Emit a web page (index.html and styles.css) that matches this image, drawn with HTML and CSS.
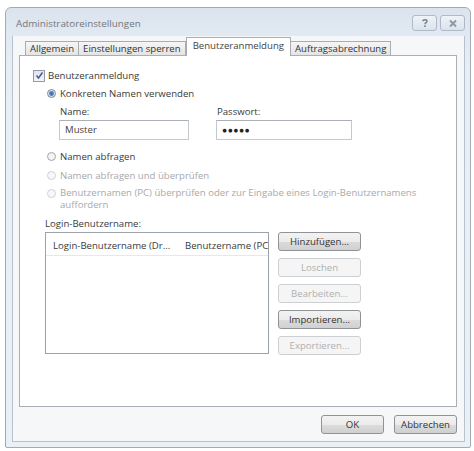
FILE: index.html
```html
<!DOCTYPE html>
<html>
<head>
    <link rel="stylesheet" href="styles.css">
</head>
<body>
    <div class="window">
        <div class="titlebar">
            <span class="title">Administratoreinstellungen</span>
            <div class="caption">
                <span class="cap-btn">
                    <svg width="10" height="10" viewBox="0 0 10 10"><path d="M3 3.2 C3 1.4 7 1.4 7 3.2 C7 4.6 5 4.6 5 6.2" fill="none" stroke="#75828f" stroke-width="1.5"/><rect x="4.2" y="7.4" width="1.6" height="1.6" fill="#75828f"/></svg>
                </span>
                <span class="cap-btn">
                    <svg width="10" height="9" viewBox="0 0 10 9"><path d="M2 1.5 L8 7.5 M8 1.5 L2 7.5" stroke="#8b97a4" stroke-width="1.8"/></svg>
                </span>
            </div>
        </div>
        <div class="client">
            <div class="tabs">
                <span class="tab">Allgemein</span>
                <span class="tab">Einstellungen sperren</span>
                <span class="tab active">Benutzeranmeldung</span>
                <span class="tab">Auftragsabrechnung</span>
            </div>
            <div class="panel">
                <label class="row check-row">
                    <span class="checkbox">
                        <svg width="9" height="9" viewBox="0 0 9 9"><path d="M1.5 4.5 L3.5 7 L7.5 1.5" fill="none" stroke="#4a5c8c" stroke-width="1.5"/></svg>
                    </span>
                    Benutzeranmeldung
                </label>

                <div class="options">
                    <label class="row radio-row first">
                        <span class="radio checked"></span>
                        Konkreten Namen verwenden
                    </label>
                    <div class="fields">
                        <div class="field">
                            <span class="field-label">Name:</span>
                            <div class="input name-input">Muster</div>
                        </div>
                        <div class="field">
                            <span class="field-label">Passwort:</span>
                            <div class="input pass-input">&#9679;&#9679;&#9679;&#9679;&#9679;</div>
                        </div>
                    </div>
                    <label class="row radio-row second">
                        <span class="radio"></span>
                        Namen abfragen
                    </label>
                    <label class="row radio-row disabled third">
                        <span class="radio"></span>
                        Namen abfragen und überprüfen
                    </label>
                    <label class="row radio-row disabled fourth">
                        <span class="radio"></span>
                        <span>Benutzernamen (PC) überprüfen oder zur Eingabe eines Login-Benutzernamens<br>auffordern</span>
                    </label>
                </div>

                <div class="logins">
                    <span class="section-label">Login-Benutzername:</span>
                    <div class="logins-body">
                        <div class="listview">
                            <div class="list-header">
                                <span class="col col-login">Login-Benutzername (Dr...</span>
                                <span class="col col-pc">Benutzername (PC)</span>
                            </div>
                        </div>
                        <div class="side-buttons">
                            <button class="btn">Hinzufügen...</button>
                            <button class="btn" disabled>Loschen</button>
                            <button class="btn" disabled>Bearbeiten...</button>
                            <button class="btn">Importieren...</button>
                            <button class="btn" disabled>Exportieren...</button>
                        </div>
                    </div>
                </div>
            </div>
            <div class="footer">
                <button class="btn dialog-btn">OK</button>
                <button class="btn dialog-btn">Abbrechen</button>
            </div>
        </div>
    </div>
</body>
</html>
```

FILE: styles.css
```css
body {
    margin: 0;
    padding: 0;
    background-color: #fff;
    font-family: "Open Sans", "Noto Sans", sans-serif;
    font-size: 9.6px;
    color: #3a3a3a;
}

.window {
    box-sizing: border-box;
    margin: 7px 0 0 5px;
    width: 466px;
    height: 441px;
    border: 1px solid #a3acb6;
    border-radius: 6px 6px 2px 2px;
    background: linear-gradient(#dbe4ee, #e8eef5 60px, #e9f0f6);
    padding: 0 5px 5px 6px;
    display: flex;
    flex-direction: column;
}

.titlebar {
    height: 28px;
    display: flex;
    align-items: center;
    justify-content: space-between;
}
.title {
    font-size: 9.8px;
    color: #73777d;
    margin-left: 4px;
    margin-top: 2px;
}
.caption {
    display: flex;
    gap: 3px;
    margin-top: 2px;
}
.cap-btn {
    box-sizing: border-box;
    width: 25px;
    height: 16px;
    border: 1px solid #b0bac6;
    border-radius: 3px;
    background: linear-gradient(#eef3f8, #dae3ec);
    display: flex;
    align-items: center;
    justify-content: center;
}

.client {
    flex: 1;
    background-color: #f6f7f8;
    border: 1px solid #b9c2cc;
    border-top: none;
    padding: 1px 7px 0 6px;
    display: flex;
    flex-direction: column;
}

.tabs {
    display: flex;
    align-items: flex-end;
    height: 18px;
    padding-left: 6px;
    position: relative;
    z-index: 1;
}
.tab {
    box-sizing: border-box;
    height: 14px;
    padding: 0 4px;
    border: 1px solid #a8adb3;
    border-bottom: none;
    background: linear-gradient(#f6f6f6, #e4e4e4);
    line-height: 13px;
    color: #333;
    white-space: nowrap;
}
.tab + .tab {
    border-left: none;
}
.tab.active {
    height: 19px;
    margin-bottom: -1px;
    padding: 0 6px;
    border-left: 1px solid #a8adb3;
    background: #fff;
    line-height: 15px;
    color: #444;
}
.tab.active + .tab {
    border-left: none;
}

.panel {
    box-sizing: border-box;
    height: 352px;
    background-color: #fff;
    border: 1px solid #a9afb5;
    padding: 13px 14px 0 13px;
}

.row {
    display: flex;
    align-items: center;
    line-height: 12px;
}
.check-row {
    height: 13px;
}
.checkbox {
    box-sizing: border-box;
    width: 12px;
    height: 12px;
    margin-right: 3px;
    border: 1px solid #959aa8;
    background: linear-gradient(#dfe3ee, #f4f5f9);
    display: flex;
    align-items: center;
    justify-content: center;
}

.options {
    margin-left: 14px;
}
.radio-row {
    height: 13px;
}
.radio {
    box-sizing: border-box;
    width: 9px;
    height: 9px;
    border-radius: 50%;
    border: 1px solid #a2a6ad;
    background: #f4f4f4;
    margin-right: 4px;
    flex-shrink: 0;
}
.radio.checked {
    border-color: #7b8796;
    background: radial-gradient(circle, #3e6aa8 0, #5b86c0 2px, #dfe7f0 3px);
}
.first {
    margin-top: 5px;
}
.second {
    margin-top: 10px;
}
.third {
    margin-top: 6px;
}
.fourth {
    margin-top: 5px;
    height: auto;
    align-items: flex-start;
}
.fourth .radio {
    margin-top: 2px;
}
.disabled {
    color: #a9a9a9;
}
.disabled .radio {
    border-color: #cfd1d4;
    background: #f8f8f8;
}

.fields {
    display: flex;
    gap: 27px;
    margin: 6px 0 0 12px;
}
.field {
    display: flex;
    flex-direction: column;
}
.field-label {
    line-height: 12px;
    margin-left: 1px;
    margin-bottom: 2px;
}
.input {
    box-sizing: border-box;
    height: 20px;
    border: 1px solid #c4c9cf;
    border-top-color: #abb0b6;
    padding-left: 5px;
    line-height: 18px;
    color: #444;
}
.name-input {
    width: 130px;
}
.pass-input {
    width: 136px;
    font-size: 8.5px;
    letter-spacing: 0.5px;
    color: #222;
}

.logins {
    margin: 7px 0 0 12px;
}
.section-label {
    display: block;
    line-height: 12px;
}
.logins-body {
    display: flex;
    gap: 9px;
    margin-top: 2px;
}
.listview {
    box-sizing: border-box;
    width: 224px;
    height: 122px;
    border: 1px solid #9ca2a9;
    overflow: hidden;
}
.list-header {
    display: flex;
    height: 20px;
    border-bottom: 1px solid #e6e8ea;
    align-items: center;
    padding-top: 2px;
    white-space: nowrap;
}
.col-login {
    width: 139px;
    padding-left: 7px;
    box-sizing: border-box;
    overflow: hidden;
    flex-shrink: 0;
}
.col-pc {
    flex-shrink: 0;
}
.side-buttons {
    display: flex;
    flex-direction: column;
    gap: 7px;
}

.btn {
    box-sizing: border-box;
    width: 83px;
    height: 19px;
    padding: 0;
    border: 1px solid #8f9398;
    border-radius: 3px;
    background: linear-gradient(#f3f3f3, #ebebeb 50%, #dcdcdc 51%, #d0d0d0);
    font-family: inherit;
    font-size: 9.6px;
    color: #333;
}
.btn:disabled {
    border-color: #cdd0d3;
    background: #f5f5f5;
    color: #b0b0b0;
}

.footer {
    display: flex;
    justify-content: flex-end;
    gap: 10px;
    margin-top: 8px;
}
.dialog-btn {
    width: 63px;
    height: 19px;
}
```
